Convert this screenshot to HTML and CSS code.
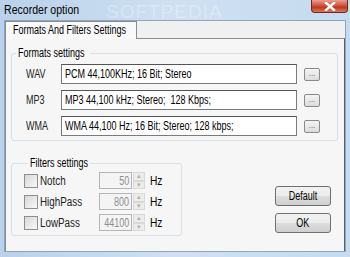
FILE: index.html
```html
<!DOCTYPE html>
<html lang="en">
<head>
  <meta charset="UTF-8">
  <title>Recorder option</title>
  <link rel="stylesheet" href="styles.css">
</head>
<body>
  <div class="window">
    <div class="titlebar">
      <span class="title t">Recorder option</span>
      <span class="watermark">SOFTPEDIA</span>
      <div class="close">
        <svg width="12" height="9" viewBox="0 0 12 9"><path d="M2 1 L10 8 M10 1 L2 8" stroke="#fff" stroke-width="2.4" stroke-linecap="square"/></svg>
      </div>
    </div>
    <div class="client">
      <div class="tabs">
        <div class="tab"><span class="t">Formats And Filters Settings</span></div>
      </div>
      <div class="panel">
        <fieldset class="group formats">
          <legend><span class="t">Formats settings</span></legend>
          <div class="row">
            <span class="fmt"><span class="t">WAV</span></span>
            <div class="field"><span class="t">PCM 44,100KHz; 16 Bit; Stereo</span></div>
            <button class="dots">...</button>
          </div>
          <div class="row">
            <span class="fmt"><span class="t">MP3</span></span>
            <div class="field"><span class="t">MP3 44,100 kHz; Stereo;&nbsp; 128 Kbps;</span></div>
            <button class="dots">...</button>
          </div>
          <div class="row">
            <span class="fmt"><span class="t">WMA</span></span>
            <div class="field"><span class="t">WMA 44,100 Hz; 16 Bit; Stereo; 128 kbps;</span></div>
            <button class="dots">...</button>
          </div>
        </fieldset>
        <div class="bottom">
          <fieldset class="group filters">
            <legend><span class="t">Filters settings</span></legend>
            <div class="frow">
              <span class="check"></span>
              <span class="flabel"><span class="t">Notch</span></span>
              <div class="spin">
                <div class="num"><span class="t">50</span></div>
                <div class="arrows"><span>&#9652;</span><span>&#9662;</span></div>
              </div>
              <span class="hz t">Hz</span>
            </div>
            <div class="frow">
              <span class="check"></span>
              <span class="flabel"><span class="t">HighPass</span></span>
              <div class="spin">
                <div class="num"><span class="t">800</span></div>
                <div class="arrows"><span>&#9652;</span><span>&#9662;</span></div>
              </div>
              <span class="hz t">Hz</span>
            </div>
            <div class="frow">
              <span class="check"></span>
              <span class="flabel"><span class="t">LowPass</span></span>
              <div class="spin">
                <div class="num"><span class="t">44100</span></div>
                <div class="arrows"><span>&#9652;</span><span>&#9662;</span></div>
              </div>
              <span class="hz t">Hz</span>
            </div>
          </fieldset>
          <div class="buttons">
            <button class="btn"><span class="t c">Default</span></button>
            <button class="btn"><span class="t c">OK</span></button>
          </div>
        </div>
      </div>
    </div>
  </div>
</body>
</html>
```

FILE: styles.css
```css
body {
  margin: 0;
  font-family: "Liberation Sans", Arial, sans-serif;
  font-size: 12px;
  color: #000;
  background: #bcd3ec;
}

/* the old dialog font is much narrower than Arial */
.t {
  display: inline-block;
  white-space: nowrap;
  transform: scaleX(0.75);
  transform-origin: left center;
}

.t.c {
  transform-origin: center center;
}

.window {
  width: 350px;
  height: 257px;
  display: flex;
  flex-direction: column;
  background: linear-gradient(90deg, #b9d1ea 0%, #cfe0f2 50%, #c6dbf0 100%);
  overflow: hidden;
}

.titlebar {
  height: 20px;
  flex-shrink: 0;
  position: relative;
  display: flex;
  align-items: center;
  padding-left: 4px;
}

.title {
  font-size: 12px;
  transform: scaleX(0.88);
}

.watermark {
  position: absolute;
  left: 106px;
  top: 1px;
  font-size: 19px;
  letter-spacing: 1px;
  color: rgba(255, 255, 255, 0.3);
}

.close {
  position: absolute;
  right: 2px;
  top: 0;
  width: 35px;
  height: 12px;
  border: 1px solid #6b2a22;
  border-top: none;
  border-radius: 0 0 4px 4px;
  background: linear-gradient(#e8a093 0%, #d2533f 45%, #c0381f 60%, #d87a5a 100%);
  display: flex;
  align-items: center;
  justify-content: center;
}

.client {
  flex: 1;
  margin: 0 4px 5px 4px;
  background: #f0f0f0;
  border: 1px solid #8ea5bf;
  display: flex;
  flex-direction: column;
}

.tabs {
  display: flex;
  height: 17px;
  flex-shrink: 0;
}

.tab {
  width: 132px;
  background: #f9f9f9;
  border: 1px solid #898c95;
  border-bottom: none;
  padding: 1px 0 0 7px;
  position: relative;
  z-index: 1;
  height: 18px;
  box-sizing: border-box;
  margin-bottom: -1px;
}

.panel {
  flex: 1;
  border: 1px solid #898c95;
  border-right-color: #5d6066;
  border-bottom: none;
  background: #f6f6f6;
  padding: 7px 6px 10px 5px;
  display: flex;
  flex-direction: column;
  gap: 15px;
}

.group {
  border: 1px solid #d5dfe5;
  border-radius: 3px;
  margin: 0;
  padding: 0;
}

.group legend {
  padding: 0 2px;
  margin-left: 4px;
}

.formats legend {
  width: 70px;
}

.filters legend {
  width: 58px;
}

.formats {
  padding: 4px 0 4px 0;
  display: flex;
  flex-direction: column;
  gap: 6px;
}

.row {
  display: flex;
  align-items: center;
}

.fmt {
  width: 49px;
  padding-left: 14px;
  box-sizing: border-box;
  color: #222;
}

.field {
  width: 236px;
  height: 20px;
  box-sizing: border-box;
  border: 1px solid #7a7a7a;
  border-top-color: #555;
  background: #fff;
  padding: 2px 3px;
  white-space: nowrap;
  overflow: hidden;
}

.dots {
  margin-left: 7px;
  width: 16px;
  height: 13px;
  padding: 0;
  border: 1px solid #8a8a8a;
  border-radius: 2px;
  background: linear-gradient(#f4f4f4, #dcdcdc);
  font-size: 8px;
  line-height: 8px;
  color: #555;
  font-family: "Liberation Sans", Arial, sans-serif;
}

.bottom {
  display: flex;
  align-items: flex-start;
}

.filters {
  width: 157px;
  padding: 0 0 2px 12px;
  display: flex;
  flex-direction: column;
}

.frow {
  display: flex;
  align-items: center;
  height: 21px;
}

.check {
  width: 12px;
  height: 12px;
  border: 1px solid #8f8f8f;
  background: linear-gradient(135deg, #d8d8d8, #f8f8f8);
  margin-right: 2px;
}

.flabel {
  width: 59px;
  color: #222;
}

.flabel .t {
  transform: scaleX(0.82);
}

.spin {
  display: flex;
  align-items: center;
}

.num {
  width: 33px;
  height: 17px;
  box-sizing: border-box;
  border: 1px solid #b5b5b5;
  background: #f4f4f4;
  color: #8d8d8d;
  display: flex;
  justify-content: flex-end;
  padding: 1px 2px 0 0;
}

.num .t {
  transform-origin: right center;
}

.arrows {
  display: flex;
  flex-direction: column;
  width: 12px;
  height: 17px;
  margin-left: 1px;
}

.arrows span {
  flex: 1;
  border: 1px solid #d8d8d8;
  background: #ececec;
  color: #b0b0b0;
  font-size: 7px;
  line-height: 6px;
  text-align: center;
}

.hz {
  margin-left: 5px;
  transform: scaleX(0.85);
}

.buttons {
  margin-left: auto;
  margin-right: 7px;
  margin-top: 30px;
  display: flex;
  flex-direction: column;
  gap: 7px;
}

.btn {
  width: 56px;
  height: 20px;
  border: 1px solid #707070;
  border-radius: 3px;
  background: linear-gradient(#f2f2f2 0%, #ebebeb 50%, #dddddd 51%, #cfcfcf 100%);
  font-family: "Liberation Sans", Arial, sans-serif;
  font-size: 12px;
  padding: 0;
  color: #000;
}
```
